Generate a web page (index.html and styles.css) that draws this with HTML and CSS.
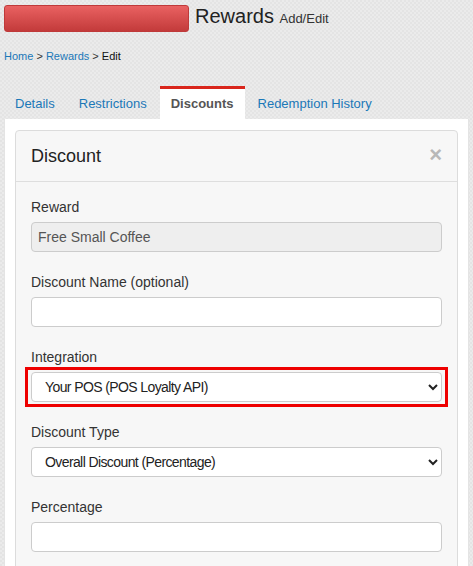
FILE: index.html
```html
<!DOCTYPE html>
<html lang="en">
<head>
    <meta charset="UTF-8">
    <meta name="viewport" content="width=device-width, initial-scale=1.0">
    <title>Rewards - Add/Edit</title>
    <link rel="stylesheet" href="styles.css">
</head>
<body>
    <div class="page-header">
        <div class="brand-bar"></div>
        <h1>Rewards <small>Add/Edit</small></h1>
    </div>

    <div class="breadcrumb">
        <a href="#">Home</a> &gt; <a href="#">Rewards</a> &gt; <span>Edit</span>
    </div>

    <ul class="tabs">
        <li><a href="#">Details</a></li>
        <li><a href="#">Restrictions</a></li>
        <li class="active"><a href="#">Discounts</a></li>
        <li><a href="#">Redemption History</a></li>
    </ul>

    <div class="tab-panel">
        <div class="modal">
            <div class="modal-header">
                <span class="close">&times;</span>
                <h4>Discount</h4>
            </div>
            <div class="modal-body">
                <div class="form-group">
                    <label>Reward</label>
                    <input class="form-control" type="text" value="Free Small Coffee" disabled>
                </div>
                <div class="form-group">
                    <label>Discount Name (optional)</label>
                    <input class="form-control" type="text">
                </div>
                <div class="form-group">
                    <label>Integration</label>
                    <div class="highlight">
                        <select class="form-control">
                            <option>Your POS (POS Loyalty API)</option>
                        </select>
                    </div>
                </div>
                <div class="form-group">
                    <label>Discount Type</label>
                    <select class="form-control">
                        <option>Overall Discount (Percentage)</option>
                    </select>
                </div>
                <div class="form-group">
                    <label>Percentage</label>
                    <input class="form-control" type="text">
                </div>
            </div>
        </div>
    </div>
</body>
</html>
```

FILE: styles.css
```css
html, body {
    height: 100%;
}

body {
    margin: 0;
    padding: 0 4px;
    font-family: 'Liberation Sans', Arial, sans-serif;
    font-size: 14px;
    color: #333;
    background-color: #e8e8e8;
    background-image: repeating-conic-gradient(#ebebeb 0 25%, #e4e4e4 0 50%);
    background-size: 4px 4px;
    overflow: hidden;
}

a {
    color: #1b78b8;
    text-decoration: none;
}

.page-header {
    display: flex;
    align-items: flex-start;
    padding-top: 5px;
}

.brand-bar {
    width: 185px;
    height: 27px;
    box-sizing: border-box;
    border: 1px solid #bf3a3a;
    border-radius: 3px;
    background: linear-gradient(to bottom, #e96161, #c33b3b);
}

.page-header h1 {
    margin: 0 0 0 6px;
    font-size: 20px;
    line-height: 22px;
    font-weight: normal;
    color: #222;
}

.page-header h1 small {
    font-size: 13px;
    color: #333;
}

.breadcrumb {
    margin-top: 16px;
    font-size: 11px;
    line-height: 16px;
    color: #333;
}

.breadcrumb span {
    color: #111;
}

.tabs {
    display: flex;
    gap: 2px;
    list-style: none;
    margin: 22px 0 0;
    padding: 0;
}

.tabs a {
    display: block;
    padding: 5px 11px 6px;
    border-top: 3px solid transparent;
    font-size: 13px;
    line-height: 19px;
}

.tabs .active a {
    background: #fff;
    border-top-color: #d9261c;
    color: #555;
    font-weight: bold;
}

.tab-panel {
    background: #fff;
    border: 1px solid #e4e4e4;
    border-top: 0;
    padding: 11px 10px 10px;
    min-height: 420px;
}

.modal {
    background: #f7f7f7;
    border: 1px solid #dcdcdc;
    border-radius: 4px;
}

.modal-header {
    padding: 15px;
    border-bottom: 1px solid #dedede;
}

.modal-header h4 {
    margin: 0;
    font-size: 18px;
    line-height: 20px;
    font-weight: normal;
    color: #222;
}

.close {
    float: right;
    font-size: 22px;
    line-height: 18px;
    font-weight: bold;
    color: #b8b8b8;
}

.modal-body {
    padding: 15px;
}

.form-group {
    margin-bottom: 20px;
}

.form-group label {
    display: block;
    margin-bottom: 5px;
    line-height: 20px;
}

.form-control {
    display: block;
    width: 100%;
    height: 30px;
    box-sizing: border-box;
    margin: 0;
    padding: 4px 6px;
    font-family: inherit;
    font-size: 14px;
    color: #555;
    background-color: #fff;
    border: 1px solid #ccc;
    border-radius: 4px;
}

.form-control:disabled {
    background-color: #eee;
}

select.form-control {
    padding: 0 6px 0 9px;
    letter-spacing: -0.6px;
    color: #222;
}

/* red callout around the integration picker */
.highlight {
    margin: 0 -6px;
    padding: 2px 3px;
    border: 3px solid #ee0000;
    position: relative;
    top: -5px;
    margin-bottom: -10px;
}
```
